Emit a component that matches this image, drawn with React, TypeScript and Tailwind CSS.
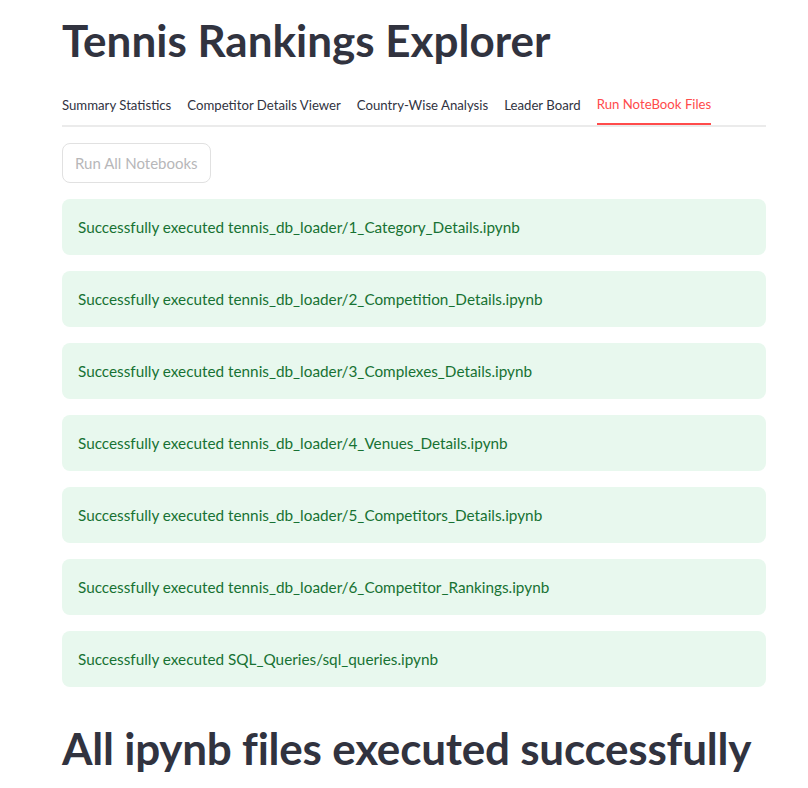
const tabs = [
  "Summary Statistics",
  "Competitor Details Viewer",
  "Country-Wise Analysis",
  "Leader Board",
  "Run NoteBook Files",
];

const notebooks = [
  "tennis_db_loader/1_Category_Details.ipynb",
  "tennis_db_loader/2_Competition_Details.ipynb",
  "tennis_db_loader/3_Complexes_Details.ipynb",
  "tennis_db_loader/4_Venues_Details.ipynb",
  "tennis_db_loader/5_Competitors_Details.ipynb",
  "tennis_db_loader/6_Competitor_Rankings.ipynb",
  "SQL_Queries/sql_queries.ipynb",
];

export default function App() {
  const active = 4;

  return (
    <div
      className="min-h-[788px] bg-white text-[#31333F] pl-[62px] pr-[42px] pt-[14px]"
      style={{ fontFamily: "Lato, 'Noto Sans', sans-serif" }}
    >
      <h1 className="text-[44px] font-bold leading-[52px]">
        Tennis Rankings Explorer
      </h1>

      <div className="mt-[19px] flex gap-4 border-b-2 border-[#ebebeb] text-[13.2px]">
        {tabs.map((t, i) => (
          <div
            key={t}
            className={
              i === active
                ? "h-10 pt-[2px] flex items-center text-[#ff4b4b] border-b-2 border-[#ff4b4b] -mb-[2px]"
                : "h-10 pt-[2px] flex items-center"
            }
          >
            {t}
          </div>
        ))}
      </div>

      <button
        disabled
        className="mt-4 h-10 px-3 rounded-lg border border-[#e1e1e1] text-[15px] text-[#b7b7b9] bg-white"
      >
        Run All Notebooks
      </button>

      <div className="mt-4 flex flex-col gap-4">
        {notebooks.map((n) => (
          <div
            key={n}
            className="h-14 flex items-center px-4 rounded-lg bg-[#e8f8ee] text-[#177233] text-[15.3px]"
          >
            Successfully executed {n}
          </div>
        ))}
      </div>

      <h1 className="mt-[35px] text-[44px] font-bold leading-[52px] tracking-[-0.005em]">
        All ipynb files executed successfully
      </h1>
    </div>
  );
}
